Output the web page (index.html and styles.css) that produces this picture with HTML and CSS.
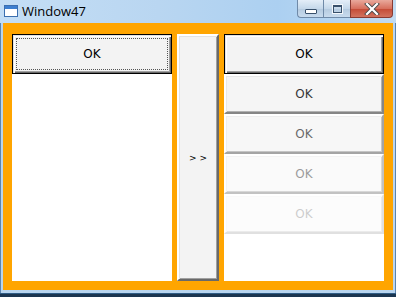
FILE: index.html
```html
<!DOCTYPE html>
<html>
<head>
<meta charset="utf-8">
<link rel="stylesheet" href="styles.css">
</head>
<body>
<div class="window">
  <div class="titlebar">
    <div class="appicon"><div class="appicon-bar"></div></div>
    <div class="title">Window47</div>
    <div class="caption">
      <div class="cbtn cmin"><div class="glyph-min"></div></div>
      <div class="cbtn cmax"><div class="glyph-max"></div></div>
      <div class="cbtn cclose">
        <svg width="16" height="12" viewBox="0 0 16 12"><path d="M3 1 L13 11 M13 1 L3 11" stroke="#4a4a4a" stroke-width="4" stroke-linecap="square"/><path d="M3 1 L13 11 M13 1 L3 11" stroke="#ffffff" stroke-width="2.2" stroke-linecap="square"/></svg>
      </div>
    </div>
  </div>
  <div class="client">
    <div class="panel">
      <div class="btn default focused"><span class="focus">OK</span></div>
    </div>
    <div class="btn tall"><span class="arrows">&gt; &gt;</span></div>
    <div class="panel">
      <div class="btn default">OK</div>
      <div class="btn o80">OK</div>
      <div class="btn o60">OK</div>
      <div class="btn o40">OK</div>
      <div class="btn o20">OK</div>
    </div>
  </div>
</div>
</body>
</html>
```
FILE: styles.css
```css
html, body { margin: 0; padding: 0; }
body { width: 396px; height: 297px; overflow: hidden; background: #1b3550; font-family: "DejaVu Sans", "Noto Sans", sans-serif; }
.window {
  width: 396px; height: 294px;
  background: #b9d5ef;
  border-bottom: 1px solid #2f5c86;
  box-sizing: border-box;
  display: flex; flex-direction: column;
  padding: 0 3px 3px 3px;
  box-shadow: inset 1px 0 0 #5d84ad, inset -1px 0 0 #5d84ad;
}
.titlebar {
  height: 23px; flex: none;
  display: flex; align-items: flex-start;
  margin: 0 -3px; padding: 0 3px;
  background: linear-gradient(90deg, #c4def5 0%, #b9d6f1 40%, #acd0f1 70%, #c1dbf2 100%);
  position: relative;
}
.appicon {
  width: 14px; height: 12px; margin: 5px 0 0 1px;
  border: 1px solid #3b6fb0; box-sizing: border-box;
  background: #fff;
}
.appicon-bar { height: 3px; background: #3d7fd0; }
.title { font-family: "Open Sans", "DejaVu Sans", sans-serif; font-size: 13px; line-height: 16px; margin: 3px 0 0 4px; color: #000; }
.caption { margin-left: auto; margin-right: 0px; display: flex; height: 18px; }
.cbtn {
  height: 18px; box-sizing: border-box;
  border: 1px solid #6f8aa8; border-top: none;
  display: flex; align-items: center; justify-content: center;
}
.cmin { width: 26px; border-radius: 0 0 0 4px; background: linear-gradient(#e4eef8, #c5d8ea 50%, #b4cadf 51%, #c8dbee); border-right: none; }
.cmax { width: 27px; background: linear-gradient(#e4eef8, #c5d8ea 50%, #b4cadf 51%, #c8dbee); border-right: none; }
.cclose { width: 43px; border-radius: 0 0 4px 0; background: linear-gradient(#e9a99c, #d7705e 50%, #c44a35 51%, #d2735f); border-color: #8a3b33; }
.glyph-min { width: 10px; height: 3px; background: #fff; border: 1px solid #38506b; margin-top: 5px; border-radius: 1px; }
.glyph-max { width: 7px; height: 5px; border: 1px solid #38506b; border-top-width: 2px; background: transparent; box-shadow: 0 0 0 1px #f3f7fb; }
.client {
  flex: 1;
  background: #ffa500;
  display: grid;
  grid-template-columns: 160px 42px 160px;
  column-gap: 5px;
  padding: 11px 9px 9px 9px;
}
.panel { background: #fff; display: flex; flex-direction: column; }
.btn {
  height: 40px; box-sizing: border-box;
  background: #f3f3f3;
  border-style: solid; border-width: 2px;
  border-color: #fff #696969 #696969 #fff;
  box-shadow: inset 1px 1px 0 #e3e3e3, inset -1px -1px 0 #a0a0a0;
  display: flex; align-items: center; justify-content: center;
  font-size: 12px; color: #000;
  font-family: "DejaVu Sans", sans-serif;
}
.btn.default {
  border: 1px solid #000;
  box-shadow: inset 1px 1px 0 #e3e3e3, inset 2px 2px 0 #fff, inset -1px -1px 0 #696969, inset -2px -2px 0 #a0a0a0;
}
.btn.focused { position: relative; }
.btn.focused::after {
  content: ""; position: absolute; left: 3px; top: 3px; right: 3px; bottom: 3px;
  border: 1px dotted #555;
}
.btn.tall { height: auto; font-size: 9px; }
.arrows { letter-spacing: 0; }
.o80 { opacity: 0.8; }
.o60 { opacity: 0.6; }
.o40 { opacity: 0.4; }
.o20 { opacity: 0.2; }
```
